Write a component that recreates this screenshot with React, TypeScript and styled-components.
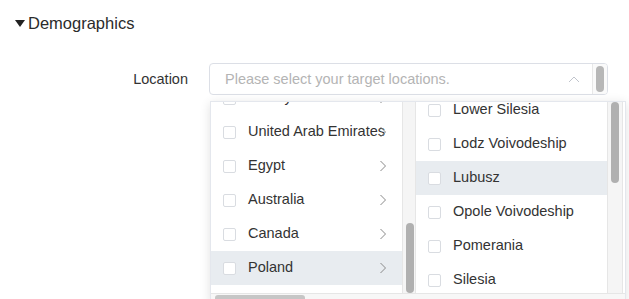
import { useLayoutEffect, useRef, useState } from 'react';
import styled, { createGlobalStyle } from 'styled-components';

const GlobalStyle = createGlobalStyle`
    body {
        margin: 0;
        background: #ffffff;
        color: #333333;
        font-family: 'Liberation Sans', Arial, sans-serif;
    }
`;

const ROW_HEIGHT = 34;
const PANEL_HEIGHT = 191;
const LIST_PAD_BOTTOM = 8;

const countries = [
    'China',
    'Japan',
    'South Korea',
    'India',
    'Germany',
    'France',
    'United Kingdom',
    'Italy',
    'Spain',
    'Turkey',
    'United Arab Emirates',
    'Egypt',
    'Australia',
    'Canada',
    'Poland',
];

const regions = [
    'Lower Silesia',
    'Lodz Voivodeship',
    'Lubusz',
    'Opole Voivodeship',
    'Pomerania',
    'Silesia',
    'Lesser Poland',
    'Masovia',
    'Podlaskie',
    'Subcarpathia',
    'Swietokrzyskie',
    'Warmia-Masuria',
    'West Pomerania',
];

const Page = styled.div`
    height: 299px;
    overflow: hidden;
`;

const Header = styled.div`
    display: flex;
    align-items: center;
    gap: 3px;
    padding: 13px 0 0 15px;
    height: 20px;
    font-size: 16.5px;
    line-height: 20px;
    color: #2b2b2b;
`;

const Caret = styled.span`
    width: 0;
    height: 0;
    border-left: 5px solid transparent;
    border-right: 5px solid transparent;
    border-top: 7px solid #222222;
`;

const FormRow = styled.div`
    display: flex;
    align-items: center;
    margin-top: 30px;
`;

const Label = styled.label`
    width: 209px;
    padding-right: 21px;
    box-sizing: border-box;
    text-align: right;
    font-size: 14.5px;
    color: #333333;
`;

const SelectBox = styled.div`
    position: relative;
    width: 399px;
    height: 32px;
    box-sizing: border-box;
    border: 1px solid #dcdfe6;
    border-radius: 4px;
    display: flex;
    align-items: stretch;
`;

const Placeholder = styled.div`
    flex: 1;
    display: flex;
    align-items: center;
    padding-left: 15px;
    font-size: 14.5px;
    color: #b4b4b4;
`;

const Arrow = styled.div`
    display: flex;
    align-items: center;
    padding-right: 12px;
`;

const SelectTrack = styled.div`
    width: 14px;
    border-left: 1px solid #e8e8e8;
    background: #fafafa;
    border-radius: 0 3px 3px 0;
    display: flex;
    justify-content: center;
    padding: 2px 0;
`;

const SelectThumb = styled.div`
    width: 8px;
    border-radius: 4px;
    background: #b7b7b7;
`;

const Menu = styled.div`
    position: absolute;
    top: 37px;
    left: 0;
    width: 414px;
    background: #ffffff;
    border: 1px solid #e4e7ed;
    box-shadow: 0 2px 10px rgba(0, 0, 0, 0.12);
    display: flex;
    flex-direction: column;
    z-index: 2;
`;

const Panels = styled.div`
    display: flex;
    height: ${PANEL_HEIGHT}px;
`;

const Panel = styled.div`
    display: flex;
`;

const List = styled.ul<{ $width: number }>`
    list-style: none;
    margin: 0;
    padding: 0 0 ${LIST_PAD_BOTTOM}px;
    width: ${(p) => p.$width}px;
    height: ${PANEL_HEIGHT}px;
    box-sizing: border-box;
    overflow: hidden;
`;

const Row = styled.li<{ $active?: boolean }>`
    display: flex;
    align-items: center;
    height: ${ROW_HEIGHT}px;
    padding: 0 15px 2px 12px;
    box-sizing: border-box;
    background: ${(p) => (p.$active ? '#e8ecf0' : 'transparent')};
    font-size: 14.5px;
    color: #333333;
`;

const Check = styled.span`
    flex-shrink: 0;
    width: 13px;
    height: 13px;
    box-sizing: border-box;
    border: 1px solid #d9dce1;
    border-radius: 2px;
    background: #ffffff;
    margin: 2px 12px 0 0;
`;

const RowText = styled.span`
    flex: 1 1 0;
    min-width: 0;
    white-space: nowrap;
`;

const Track = styled.div<{ $width: number }>`
    position: relative;
    width: ${(p) => p.$width}px;
    box-sizing: border-box;
    background: #f5f5f5;
    border-left: 1px solid #e6e6e6;
    border-right: 1px solid #e6e6e6;
`;

const Thumb = styled.div`
    position: absolute;
    left: 3px;
    width: 8px;
    border-radius: 4px;
    background: #b0b0b0;
`;

const HTrack = styled.div`
    position: relative;
    height: 8px;
    border-top: 1px solid #e6e6e6;
    background: #f7f7f7;
`;

const HThumb = styled.div`
    position: absolute;
    top: 1px;
    left: 4px;
    width: 90px;
    height: 6px;
    border-radius: 3px;
    background: #c6c6c6;
`;

const ChevronRight = () => (
    <svg width='8' height='12' viewBox='0 0 8 12' style={{ marginTop: 2 }}>
        <polyline points='1.5,1 6.5,6 1.5,11' fill='none' stroke='#8a8a8a' strokeWidth='1' />
    </svg>
);

const ChevronUp = () => (
    <svg width='12' height='7' viewBox='0 0 12 7'>
        <polyline points='1,6 6,1 11,6' fill='none' stroke='#c0c4cc' strokeWidth='1' />
    </svg>
);

interface PanelProps {
    items: string[];
    active: string;
    width: number;
    trackWidth: number;
    scroll: number | 'end';
    expandable?: boolean;
}

const CascaderPanel = ({ items, active, width, trackWidth, scroll, expandable }: PanelProps) => {
    const ref = useRef<HTMLUListElement>(null);
    const [offset, setOffset] = useState(0);
    const contentHeight = items.length * ROW_HEIGHT + LIST_PAD_BOTTOM;

    useLayoutEffect(() => {
        if (!ref.current) return;
        const max = contentHeight - PANEL_HEIGHT;
        const top = scroll === 'end' ? max : Math.min(scroll, max);
        ref.current.scrollTop = top;
        setOffset(top);
    }, []);

    const thumbHeight = (PANEL_HEIGHT * PANEL_HEIGHT) / contentHeight;
    const thumbTop = offset < 20 ? 0 : (offset / contentHeight) * PANEL_HEIGHT;

    return (
        <Panel>
            <List ref={ref} $width={width}>
                {items.map((name) => (
                    <Row key={name} $active={name === active}>
                        <Check />
                        <RowText>{name}</RowText>
                        {expandable && <ChevronRight />}
                    </Row>
                ))}
            </List>
            <Track $width={trackWidth}>
                <Thumb style={{ top: thumbTop, height: thumbHeight }} />
            </Track>
        </Panel>
    );
};

const App = () => {
    return (
        <Page>
            <GlobalStyle />
            <Header>
                <Caret />
                Demographics
            </Header>
            <FormRow>
                <Label>Location</Label>
                <SelectBox>
                    <Placeholder>Please select your target locations.</Placeholder>
                    <Arrow>
                        <ChevronUp />
                    </Arrow>
                    <SelectTrack>
                        <SelectThumb />
                    </SelectTrack>
                    <Menu>
                        <Panels>
                            <CascaderPanel
                                items={countries}
                                active={'Poland'}
                                width={191}
                                trackWidth={14}
                                scroll={'end'}
                                expandable
                            />
                            <CascaderPanel
                                items={regions}
                                active={'Lubusz'}
                                width={191}
                                trackWidth={16}
                                scroll={9}
                            />
                        </Panels>
                        <HTrack>
                            <HThumb />
                        </HTrack>
                    </Menu>
                </SelectBox>
            </FormRow>
        </Page>
    );
};

export default App;
